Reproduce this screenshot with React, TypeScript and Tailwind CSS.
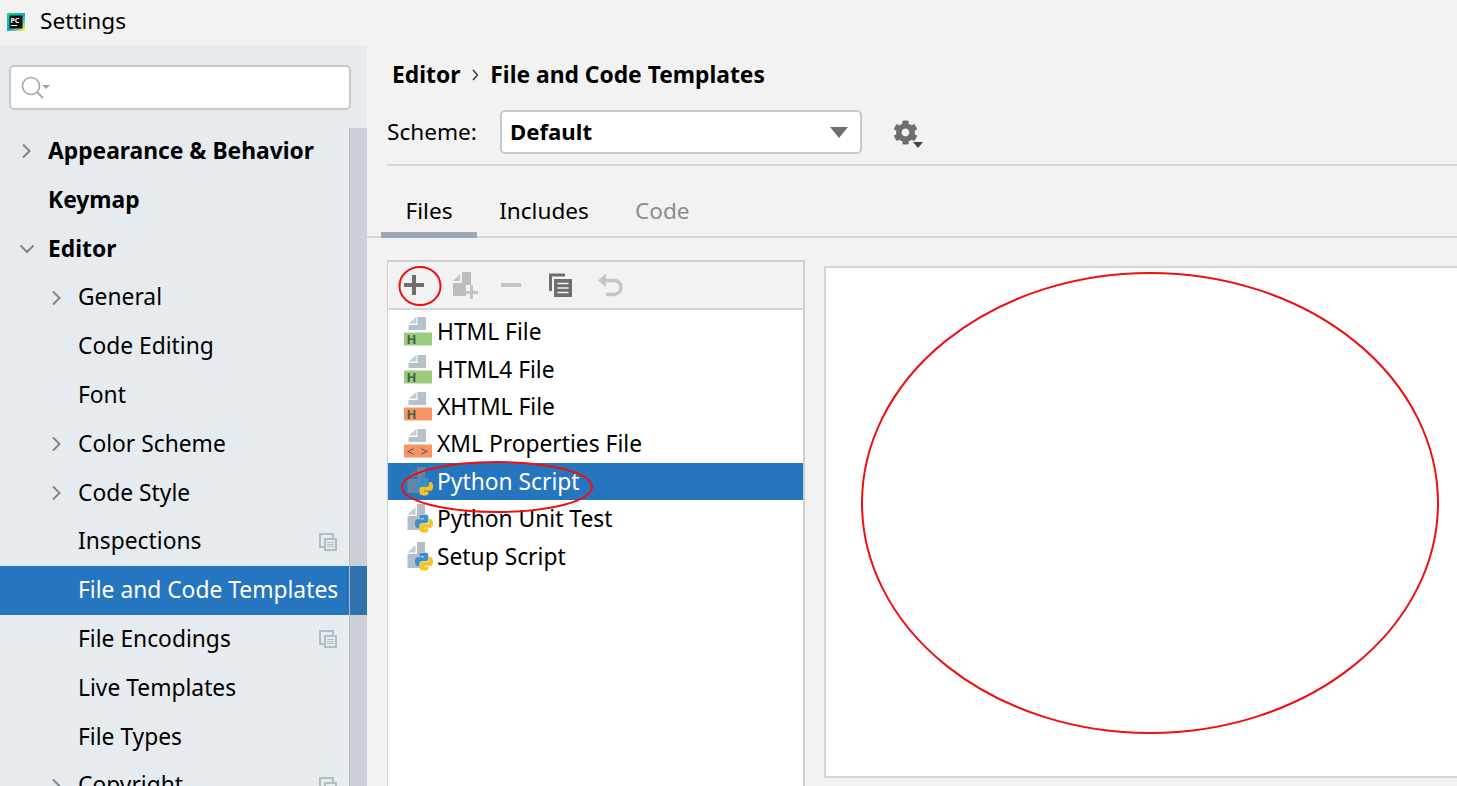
import React from "react";
import { FaCog } from "react-icons/fa";

const font = { fontFamily: '"Noto Sans", "Open Sans", sans-serif' };

function Chevron({ down = false }: { down?: boolean }) {
  return (
    <svg width="16" height="16" viewBox="0 0 16 16" fill="none" stroke="#858585" strokeWidth="2" className="shrink-0">
      {down ? <path d="M1.5 4.5 L8 11 L14.5 4.5" /> : <path d="M4 1.5 L10.5 8 L4 14.5" />}
    </svg>
  );
}

function CopyBadge({ color = "#b3bdc4", bg = "#e6ebf0" }: { color?: string; bg?: string }) {
  return (
    <svg width="18" height="18" viewBox="0 0 18 18" className="shrink-0">
      <rect x="0" y="0" width="13" height="13" fill="none" stroke={color} strokeWidth="2" transform="translate(1 1)" />
      <rect x="5" y="5" width="13" height="13" fill={color} />
      <rect x="7" y="7" width="9" height="9" fill={bg} />
      <path d="M8 9.5h7M8 11.5h7M8 13.5h7" stroke={color} strokeWidth="1" />
    </svg>
  );
}

function SideRow({
  label, indent = 0, arrow, bold, selected, badge,
}: { label: string; indent?: 0 | 1; arrow?: "right" | "down"; bold?: boolean; selected?: boolean; badge?: boolean }) {
  return (
    <div className={`flex h-[48.8px] items-center ${selected ? "bg-[#2675bf] text-white" : "text-black"}`}>
      <div className={`flex shrink-0 justify-start ${indent ? "w-[78px] pl-[49px]" : "w-[48px] pl-[19px]"}`}>
        {arrow && <Chevron down={arrow === "down"} />}
      </div>
      <span className={`flex-1 whitespace-nowrap text-[22.8px] leading-none ${bold ? "font-bold" : ""}`}>{label}</span>
      {badge && <div className="mr-[30px] flex"><CopyBadge /></div>}
    </div>
  );
}

function PageIcon({ band, code }: { band: string; code?: boolean }) {
  return (
    <svg width="28" height="29" viewBox="0 0 28 29" className="shrink-0">
      <path d="M4.5 6.5 L12.5 0 V6.5 Z" fill="#c3ccd2" />
      <path d="M13.5 0 H22 V13 H4.5 V8 H13.5 Z" fill="#b7c1c9" />
      <rect x="0" y="15.5" width="28" height="13" fill={band} />
      {code ? (
        <text x="14" y="26.5" textAnchor="middle" fontSize="13" fontWeight="400" fill="#4d4d4d" fontFamily="Noto Sans" letterSpacing="1.5">{"< >"}</text>
      ) : (
        <text x="7.5" y="27" textAnchor="middle" fontSize="13" fontWeight="700" fill="#4a5d4c" fontFamily="Noto Sans">H</text>
      )}
    </svg>
  );
}

function PyIcon({ dim }: { dim?: boolean }) {
  return (
    <svg width="26" height="29" viewBox="0 0 26 29" className="ml-[3px] shrink-0">
      <path d="M0.5 10.5 L8.5 3 V10.5 Z" fill={dim ? "#5f7f9e" : "#c3ccd2"} />
      <path d="M10 0 H18 V10 H14 V26 H0.5 V12 H10 Z" fill={dim ? "#6786a3" : "#b4bec6"} />
      <g transform="translate(8 10.5) scale(0.75)">
        <path fill="#3d8fc9" fillRule="evenodd" d="M14.25.18l.9.2.73.26.59.3.45.32.34.34.25.34.16.33.1.3.04.26.02.2-.01.13V8.5l-.05.63-.13.55-.21.46-.26.38-.3.31-.33.25-.35.19-.35.14-.33.1-.3.07-.26.04-.21.02H8.77l-.69.05-.59.14-.5.22-.41.27-.33.32-.27.35-.2.36-.15.37-.1.35-.07.32-.04.27-.02.21v3.06H3.17l-.21-.03-.28-.07-.32-.12-.35-.18-.36-.26-.36-.36-.35-.46-.32-.59-.28-.73-.21-.88-.14-1.05-.05-1.23.06-1.22.16-1.04.24-.87.32-.71.36-.57.4-.44.42-.33.42-.24.4-.16.36-.1.32-.05.24-.01h.16l.06.01h8.16v-.83H6.18l-.01-2.75-.02-.37.05-.34.11-.31.17-.28.25-.26.31-.23.38-.2.44-.18.51-.15.58-.12.64-.1.71-.06.77-.04.84-.02 1.27.05z" />
        <path fill="#f5c422" fillRule="evenodd" d="M21.04 6.11l.28.06.32.12.35.18.36.27.36.35.35.47.32.59.28.73.21.88.14 1.04.05 1.23-.06 1.23-.16 1.04-.24.86-.32.71-.36.57-.4.45-.42.33-.42.24-.4.16-.36.09-.32.05-.24.02-.16-.01h-8.22v.82h5.84l.01 2.76.02.36-.05.34-.11.31-.17.29-.25.25-.31.24-.38.2-.44.17-.51.15-.58.13-.64.09-.71.07-.77.04-.84.01-1.27-.04-1.07-.14-.9-.2-.73-.25-.59-.3-.45-.33-.34-.34-.25-.34-.16-.33-.1-.3-.04-.25-.02-.2.01-.13v-5.34l.05-.64.13-.54.21-.46.26-.38.3-.32.33-.24.35-.2.35-.14.33-.1.3-.06.26-.04.21-.02.13-.01h5.84l.69-.05.59-.14.5-.21.41-.28.33-.32.27-.35.2-.36.15-.36.1-.35.07-.32.04-.28.02-.21V6.07h2.09l.14.01z" />
      </g>
    </svg>
  );
}

function FileRow({ label, icon, selected }: { label: string; icon: React.ReactNode; selected?: boolean }) {
  return (
    <div className={`flex h-[37.4px] items-center pl-[16px] ${selected ? "bg-[#2675bf] text-white" : "text-black"}`}>
      <div className="flex w-[33px] shrink-0 justify-start">{icon}</div>
      <span className="whitespace-nowrap pt-[2px] text-[22.8px] leading-none">{label}</span>
    </div>
  );
}

export default function App() {
  return (
    <div className="relative flex h-[786px] w-[1457px] flex-col overflow-hidden bg-[#f2f2f2]" style={font}>
      {/* title bar */}
      <div className="flex h-[45px] shrink-0 items-center pb-[2px] pl-[7px]">
        <svg width="18" height="18" viewBox="0 0 18 18" className="shrink-0">
          <defs>
            <linearGradient id="pc" x1="0" y1="0" x2="1" y2="1">
              <stop offset="0" stopColor="#21d789" />
              <stop offset="0.5" stopColor="#11a9c9" />
              <stop offset="1" stopColor="#fcf84a" />
            </linearGradient>
          </defs>
          <rect width="18" height="18" fill="url(#pc)" />
          <rect x="2.5" y="2.5" width="13" height="13" fill="#111" />
          <text x="3.5" y="9.5" fontSize="7" fontWeight="700" fill="#fff" fontFamily="Noto Sans">PC</text>
          <rect x="4" y="12" width="6" height="1" fill="#fff" />
        </svg>
        <span className="ml-[15px] text-[22.6px] leading-none text-black">Settings</span>
      </div>

      <div className="flex min-h-0 flex-1">
        {/* sidebar */}
        <aside className="relative flex w-[367px] shrink-0 flex-col bg-[#e6ebf0]">
          <div className="pl-[9px] pt-[20px]">
            <div className="flex h-[45px] w-[342px] items-center rounded-[5px] border-2 border-[#c6c9cc] bg-white pl-[9px]">
              <svg width="32" height="28" viewBox="0 0 32 28" fill="none">
                <circle cx="11" cy="12" r="8.5" stroke="#a3acb3" strokeWidth="1.7" />
                <path d="M17 18 L23 24" stroke="#a3acb3" strokeWidth="2" />
                <path d="M22 11 H30 L26 15 Z" fill="#9aa3aa" />
              </svg>
            </div>
          </div>
          <div className="mt-[17px] flex flex-col">
            <SideRow label="Appearance & Behavior" arrow="right" bold />
            <SideRow label="Keymap" bold />
            <SideRow label="Editor" arrow="down" bold />
            <SideRow label="General" indent={1} arrow="right" />
            <SideRow label="Code Editing" indent={1} />
            <SideRow label="Font" indent={1} />
            <SideRow label="Color Scheme" indent={1} arrow="right" />
            <SideRow label="Code Style" indent={1} arrow="right" />
            <SideRow label="Inspections" indent={1} badge />
            <SideRow label="File and Code Templates" indent={1} selected />
            <SideRow label="File Encodings" indent={1} badge />
            <SideRow label="Live Templates" indent={1} />
            <SideRow label="File Types" indent={1} />
            <SideRow label="Copyright" indent={1} arrow="right" badge />
          </div>
          <div className="absolute bottom-0 right-0 top-[83px] w-[18px] border-l border-[#b7bcc2] bg-[#5a6470]/20" />
        </aside>

        {/* main */}
        <main className="flex min-w-0 flex-1 flex-col">
          <div className="flex h-[60px] shrink-0 items-center pl-[25px] text-[22.8px] font-bold leading-none text-black">
            <span>Editor</span>
            <svg width="8" height="12" viewBox="0 0 8 12" fill="none" stroke="#333" strokeWidth="1.4" className="mx-[11px]">
              <path d="M2 1 L6.5 6 L2 11" />
            </svg>
            <span>File and Code Templates</span>
          </div>
          <div className="ml-[20px] flex h-[61px] shrink-0 items-start border-b-2 border-[#d5d5d5] pt-[5px]">
            <span className="mt-[11px] w-[113px] text-[22.6px] leading-none text-black">Scheme:</span>
            <div className="flex h-[44px] w-[362px] items-center justify-between rounded-[5px] border-2 border-[#c6c9cc] bg-white pl-[8px] pr-[12px]">
              <span className="text-[22.2px] font-bold leading-none text-black">Default</span>
              <svg width="18" height="11" viewBox="0 0 18 11"><path d="M0 0 H18 L9 11 Z" fill="#6e6e6e" /></svg>
            </div>
            <div className="relative ml-[31px] mt-[10px] flex">
              <FaCog size={25} color="#6e6e6e" />
              <svg width="10" height="6" viewBox="0 0 10 6" className="absolute -right-[5px] bottom-[-3px]"><path d="M0 0 H10 L5 6 Z" fill="#444" /></svg>
            </div>
          </div>
          <div className="flex h-[72px] shrink-0 items-end border-b-2 border-[#d5d5d5] pl-[14px] text-[22.6px] leading-none">
            <div className="-mb-[2px] flex h-[46px] w-[96px] items-start justify-center border-b-[6px] border-[#9ca7b8] pt-[8px] text-black">Files</div>
            <div className="-mb-[2px] flex h-[46px] w-[134px] items-start justify-center pt-[8px] text-black">Includes</div>
            <div className="-mb-[2px] flex h-[46px] items-start pl-[24px] pt-[8px] text-[#8c8c8c]">Code</div>
          </div>

          <div className="flex min-h-0 flex-1 items-start pl-[20px] pt-[22px]">
            {/* file list */}
            <div className="h-[540px] w-[418px] shrink-0 border-y-2 border-l border-r-2 border-[#cfcfcf] bg-white">
              <div className="flex h-[48px] items-center border-b-2 border-[#d5d5d5] bg-[#f2f2f2] pl-[16px]">
                <svg width="20" height="20" viewBox="0 0 20 20" className="shrink-0"><path d="M8 0h4v8h8v4h-8v8H8v-8H0V8h8Z" fill="#6e6e6e" /></svg>
                <svg width="26" height="28" viewBox="0 0 26 28" className="ml-[28px] shrink-0">
                  <path d="M1 10 L8 3 V10 Z" fill="#c4c4c4" />
                  <path d="M10 1 H19 V14 H14 V25 H1 V12 H10 Z" fill="#bdbdbd" />
                  <path d="M18 14h3v6h5v3h-5v5h-3v-5h-5v-3h5Z" fill="#c4c4c4" />
                </svg>
                <svg width="20" height="4" viewBox="0 0 20 4" className="ml-[23px] shrink-0"><rect width="20" height="4" fill="#c4c4c4" /></svg>
                <svg width="24" height="24" viewBox="0 0 24 24" className="ml-[27px] shrink-0">
                  <path d="M1 0.5 H17 V3.5 H4 V18 H1 Z" fill="#6e6e6e" />
                  <rect x="6" y="6" width="18" height="18" fill="#6e6e6e" />
                  <path d="M9.5 10.5h11M9.5 15h11M9.5 19.5h11" stroke="#f2f2f2" strokeWidth="1.7" />
                </svg>
                <svg width="26" height="24" viewBox="0 0 26 24" fill="none" className="ml-[25px] shrink-0">
                  <path d="M9 0.5 L1 7.5 L9 14 Z" fill="#c4c4c4" />
                  <path d="M6 7.5 H16 C21 7.5 24 10.5 24 14.5 C24 18.5 21 21.5 16 21.5 H9" stroke="#c4c4c4" strokeWidth="3.5" />
                </svg>
              </div>
              <div className="flex flex-col pt-[3px]">
                <FileRow label="HTML File" icon={<PageIcon band="#9bcc7d" />} />
                <FileRow label="HTML4 File" icon={<PageIcon band="#9bcc7d" />} />
                <FileRow label="XHTML File" icon={<PageIcon band="#f59566" />} />
                <FileRow label="XML Properties File" icon={<PageIcon band="#f59566" code />} />
                <FileRow label="Python Script" icon={<PyIcon dim />} selected />
                <FileRow label="Python Unit Test" icon={<PyIcon />} />
                <FileRow label="Setup Script" icon={<PyIcon />} />
              </div>
            </div>
            {/* preview pane */}
            <div className="ml-[19px] mt-[6px] h-[512px] flex-1 border-2 border-r-0 border-[#d5d5d5] bg-white" />
          </div>
        </main>
      </div>

      {/* red hand-drawn annotations */}
      <svg width="1457" height="786" viewBox="0 0 1457 786" fill="none" stroke="#f00f0f" strokeWidth="2" className="pointer-events-none absolute left-0 top-0">
        <ellipse cx="420" cy="286" rx="20.5" ry="19" />
        <ellipse cx="497" cy="487" rx="95" ry="25" />
        <ellipse cx="1150" cy="503" rx="288" ry="230" />
      </svg>
    </div>
  );
}
